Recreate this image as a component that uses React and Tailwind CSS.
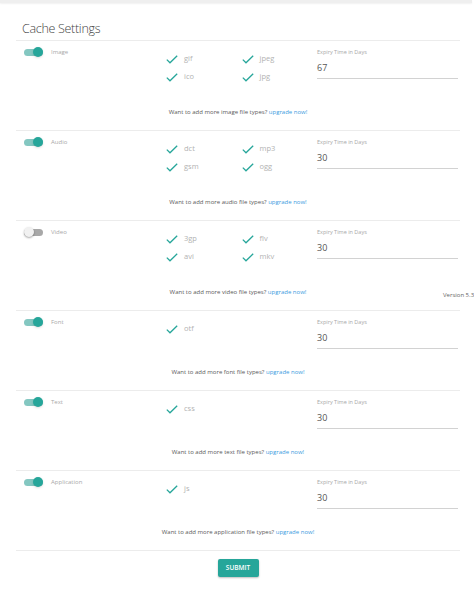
import React from 'react';

const sections = [
    { name: 'Image', on: true, types: ['gif', 'jpeg', 'ico', 'jpg'], days: '67', kind: 'image' },
    { name: 'Audio', on: true, types: ['dct', 'mp3', 'gsm', 'ogg'], days: '30', kind: 'audio' },
    { name: 'Video', on: false, types: ['3gp', 'flv', 'avi', 'mkv'], days: '30', kind: 'video' },
    { name: 'Font', on: true, types: ['otf'], days: '30', kind: 'font' },
    { name: 'Text', on: true, types: ['css'], days: '30', kind: 'text' },
    { name: 'Application', on: true, types: ['js'], days: '30', kind: 'application' },
];

const Toggle = ({ on }) => (
    <div className='relative w-[20px] h-[10px] flex items-center'>
        <div className={on ? 'w-[19px] h-[7px] rounded-full bg-[#84c7c1]' : 'w-[19px] h-[7px] rounded-full bg-[#a8a8a8]'} />
        <div className={on
            ? 'absolute left-[9px] top-0 w-[10px] h-[10px] rounded-full bg-[#26a69a] shadow-sm'
            : 'absolute left-0 top-0 w-[10px] h-[10px] rounded-full bg-[#f1f1f1] shadow-[0_1px_2px_rgba(0,0,0,0.35)]'} />
    </div>
);

const Check = () => (
    <svg width='12' height='9' viewBox='0 0 12 9' fill='none'>
        <polyline points='0.8,4.6 4,7.8 11.2,0.8' stroke='#26a69a' strokeWidth='1.3' />
    </svg>
);

const Section = ({ item }) => {
    const twoRows = item.types.length > 2;
    return (
        <div className='border-t border-[#ececec] pt-[5px] pb-[12px]'>
            <div className={twoRows ? 'flex h-[60px]' : 'flex h-[50px]'}>
                <div className='w-[150px] pl-[8px] flex items-start gap-[7px] h-[12px]'>
                    <div className='mt-[1px]'><Toggle on={item.on} /></div>
                    <span className='text-[6px] leading-[12px] text-[#a8a8a8]'>{item.name}</span>
                </div>
                <div className='w-[151px] pt-[4px] grid grid-cols-2 content-start'>
                    {item.types.map((t) => (
                        <div key={t} className='h-[18px] flex items-center gap-[6px]'>
                            <Check />
                            <span className='text-[7.5px] text-[#b2b2b2]'>{t}</span>
                        </div>
                    ))}
                </div>
                <div className='w-[141px]'>
                    <div className='text-[5.5px] leading-[12px] text-[#a8a8a8]'>Expiry Time in Days</div>
                    <div className='h-[21px] border-b border-[#d2d2d2] text-[9px] leading-[17px] text-[#555] pt-[1px]'>{item.days}</div>
                </div>
            </div>
            <p className='text-center text-[6px] leading-[12px] text-[#5a5a5a]'>
                Want to add more {item.kind} file types? <span className='text-[#3b9be0]'>upgrade now!</span>
            </p>
        </div>
    );
};

const App = () => {
    return (
        <div className='relative w-[474px] h-[594px] bg-white overflow-hidden' style={{ fontFamily: '"Open Sans", "Noto Sans", sans-serif' }}>
            <div className='w-[472px] h-[3px] bg-[#efefef] shadow-[0_1px_2px_rgba(0,0,0,0.06)]' />
            <div className='ml-[16px] w-[444px]'>
                <h1 className='pl-[6px] pt-[17px] h-[37px] text-[12.5px] leading-[18px] font-light text-[#444] tracking-[-0.3px]'>Cache Settings</h1>
                {sections.map((s) => <Section key={s.name} item={s} />)}
                <div className='border-t border-[#ececec] pt-[8px] flex justify-center'>
                    <button className='w-[41px] h-[18px] bg-[#26a69a] text-white text-[6.5px] font-semibold rounded-[2px] shadow-[0_1px_2px_rgba(0,0,0,0.25)]'>SUBMIT</button>
                </div>
            </div>
            <span className='absolute left-[443px] top-[291px] text-[6px] text-[#666] whitespace-nowrap'>Version 5.3</span>
        </div>
    );
};

export default App;
